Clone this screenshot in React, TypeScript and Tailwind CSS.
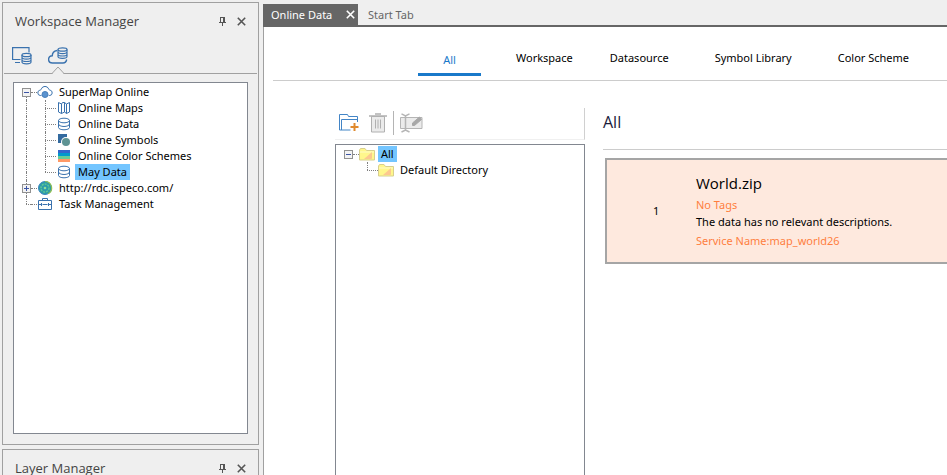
import type { ReactNode } from "react";

const blue = "#3a72ae";

function Pin() {
  return (
    <svg width="9" height="9" viewBox="0 0 9 9" fill="none" stroke="#555" shapeRendering="crispEdges">
      <path d="M2 .5h5M2.5 0v5M5.5 0v5M6.5 0v5M1 5.5h7M4.5 5v4" />
    </svg>
  );
}

function Cross() {
  return (
    <svg width="9" height="9" viewBox="0 0 9 9" fill="none" stroke="currentColor" strokeWidth="1.6">
      <path d="M.8 .8l7.4 7.4M8.2 .8L.8 8.2" />
    </svg>
  );
}

function MonitorDbIcon() {
  return (
    <svg width="20" height="18" viewBox="0 0 20 18" fill="none" stroke={blue} strokeWidth="1.2">
      <path d="M8.500 12.500H.6V.6h16.400V5.500M3 15.500h5" />
      <ellipse cx="14.500" cy="8" rx="4.500" ry="1.700" />
      <path d="M10 8v7c0 1 2 1.800 4.500 1.800S19 16 19 15V8M10 10.300c0 1 2 1.800 4.500 1.800s4.500-.8 4.500-1.800M10 12.700c0 1 2 1.800 4.500 1.800s4.500-.8 4.500-1.800" />
    </svg>
  );
}

function CloudDbIcon() {
  return (
    <svg width="20" height="18" viewBox="0 0 20 18" fill="none" stroke={blue} strokeWidth="1.200">
      <path d="M9 3.500C6 4 4.300 6 4.300 8.700 2 8.900.6 10.300.6 12.300c0 2 1.500 3.700 3.900 3.700H15c2 0 3.300-1.300 3.700-3.500" strokeWidth="1.400" />
      <ellipse cx="14.500" cy="2.500" rx="4.500" ry="1.700" />
      <path d="M10 2.500v7c0 1 2 1.800 4.500 1.800S19 10.500 19 9.500v-7M10 4.800c0 1 2 1.800 4.500 1.800S19 5.800 19 4.800M10 7.200c0 1 2 1.800 4.500 1.800S19 8.200 19 7.200" />
    </svg>
  );
}

function CloudIcon() {
  return (
    <svg width="16" height="14" viewBox="0 0 16 14" fill="none" stroke={blue}>
      <path d="M4.500 10.500H3.300A2.700 2.700 0 0 1 2.800 5.200C4 5 4 4.700 4.300 3.900a4 4 0 0 1 7.400 0c.3.800.4 1.100 1.500 1.300a2.700 2.700 0 0 1-.5 5.300h-1" />
      <circle cx="8" cy="9.500" r="3" fill="#5b93cf" stroke="#4a80bb" />
    </svg>
  );
}

function MapIcon() {
  return (
    <svg width="14" height="14" viewBox="0 0 14 14" fill="none" stroke={blue}>
      <path d="M1.500 1.500l3 1.500v9.500l-3-1.500zM4.500 3l1-1.500h2v9.500l-3 1.500M7.500 1.500l2 1.500v9.500l-2-1.500M9.500 3l3-1.500v9.500l-3 1.500" />
    </svg>
  );
}

function DbIcon() {
  return (
    <svg width="14" height="14" viewBox="0 0 14 14" fill="none" stroke={blue}>
      <ellipse cx="7" cy="3.500" rx="5.500" ry="2.300" />
      <path d="M1.500 3.500v7c0 1.300 2.500 2.300 5.500 2.300s5.500-1 5.500-2.300v-7M1.500 7c0 1.300 2.500 2.500 5.500 2.500S12.500 8.300 12.500 7" />
    </svg>
  );
}

function SymbolsIcon() {
  return (
    <svg width="14" height="14" viewBox="0 0 14 14">
      <path d="M1 1h9v9H1z" fill="#336a9f" />
      <circle cx="9" cy="9" r="5" fill="#fff" />
      <circle cx="9" cy="9" r="4" fill="#5e9393" />
    </svg>
  );
}

function ColorsIcon() {
  return (
    <svg width="14" height="14" viewBox="0 0 14 14" shapeRendering="crispEdges">
      <path d="M1 1h12v3H1z" fill="#3366cc" />
      <path d="M1 4h12v3H1z" fill="#0099cc" />
      <path d="M1 7h12v3H1z" fill="#66cc99" />
      <path d="M1 10h12v3H1z" fill="#ff9966" />
    </svg>
  );
}

function GlobeIcon() {
  return (
    <svg width="16" height="16" viewBox="0 0 16 16" fill="none">
      <circle cx="8" cy="8" r="6.500" fill="#2c9ba8" stroke="#3a86c0" />
      <path d="M8 1.500a6.500 6.500 0 0 1 3 12.300" stroke="#8cc152" strokeWidth="1.200" />
      <circle cx="8" cy="8" r="4" stroke="#5cc795" strokeWidth="1.500" strokeDasharray="2 1" />
      <circle cx="8" cy="8" r="1.300" fill="#8fdc9c" />
    </svg>
  );
}

function TaskIcon() {
  return (
    <svg width="16" height="14" viewBox="0 0 16 14" fill="none" stroke={blue}>
      <path d="M1.500 3.500h13v9h-13zM5.500 3V1.500h5V3M1.500 7.500h3M5.500 7.500h5M11.500 7.500h3M4.500 6v3M11.500 6v3" />
    </svg>
  );
}

function FolderIcon() {
  return (
    <svg width="16" height="14" viewBox="0 0 16 14">
      <path d="M.5 3l1-1.500h4.500l1.500 2h8v9.500H.5z" fill="#fff78c" stroke="#d8cf8e" />
      <path d="M1 5h14" stroke="#fffbc8" />
      <path d="M5 12l8-7v6.500l-1 .5z" fill="#fcc890" />
    </svg>
  );
}

function NewFolderIcon() {
  return (
    <svg width="20" height="19" viewBox="0 0 20 19" fill="none" stroke="#4385c6">
      <path d="M18.500 9V3.500H9.500l-1-2H.5v15.500h11M2.500 17V6.500h16" />
      <path d="M15.500 10v8M11.500 14h8" stroke="#e08a2e" strokeWidth="2" />
    </svg>
  );
}

function TrashIcon() {
  return (
    <svg width="18" height="20" viewBox="0 0 18 20" fill="none" stroke="#b0b0b0">
      <path d="M2.500 3.500h13v15.500h-13z" fill="#ebebeb" />
      <path d="M0 3h18M6 1h6" strokeWidth="1.500" />
      <path d="M6.500 6.500v9M9 6.500v9M11.500 6.500v9" />
    </svg>
  );
}

function RenameIcon() {
  return (
    <svg width="23" height="20" viewBox="0 0 23 20" fill="none" stroke="#b5b5b5">
      <path d="M.5 4.500h21.500v11H.5z" fill="#ebebeb" />
      <path d="M5.500 2v16M1.500 .8l4 2 4-2M1.500 19l4-2 4 2" strokeWidth="1.500" />
      <path d="M12.500 12.500v-2.500l7-6 2 2.500-7 6z" fill="#a8a8a8" stroke="#a8a8a8" />
    </svg>
  );
}

type TreeItem = {
  icon: ReactNode;
  label: string;
  open?: boolean;
  child?: boolean;
  selected?: boolean;
  above?: boolean;
  below?: boolean;
  last?: boolean;
};

/* One row of a tree: dotted guide lines, an optional toggle, icon and label. */
function TreeRow({ icon, label, open, child, selected, above, below, last }: TreeItem) {
  const dots = "border-dotted border-[#808080]";
  return (
    <li className="flex h-4">
      {open !== undefined ? (
        <span className="flex w-[9px] flex-col items-center">
          <span className={`h-1 w-px ${dots} ${above ? "border-l" : ""}`} />
          <button aria-label={`${open ? "Collapse" : "Expand"} ${label}`} className="block h-[9px] w-[9px]">
            <svg className="block" width="9" height="9" viewBox="0 0 9 9" shapeRendering="crispEdges">
              <rect x=".5" y=".5" width="8" height="8" fill="#f3f3f3" stroke="#919191" />
              <path d={open ? "M2 4.500h5" : "M2 4.500h5M4.500 2v5"} stroke="#3c55a5" />
            </svg>
          </button>
          <span className={`w-px flex-1 ${dots} ${below ? "border-l" : ""}`} />
        </span>
      ) : (
        <span className="flex w-[9px] flex-col pl-1">
          <span className={`h-2 ${dots} ${above ? "border-l" : ""}`} />
          <span className={`h-2 ${dots} ${below ? "border-l" : ""} ${child ? "" : "border-t"}`} />
        </span>
      )}
      {child ? (
        <span className="flex w-[25px] flex-col pl-[14px]">
          <span className={`h-2 border-l ${dots}`} />
          <span className={`h-2 border-t ${dots} ${last ? "" : "border-l"}`} />
        </span>
      ) : (
        <span className="flex w-[6px] flex-col pt-2">
          <span className={`border-t ${dots}`} />
        </span>
      )}
      <span className="flex w-4 items-center justify-center">{icon}</span>
      <span className={`ml-[3px] px-[3px] ${selected ? "bg-[#73c5ff]" : ""}`}>{label}</span>
    </li>
  );
}

function PanelHeader({ title }: { title: string }) {
  return (
    <header className="flex h-9 shrink-0 items-center justify-between px-3">
      <h2 className="font-['Open_Sans','Noto_Sans',sans-serif] text-[13px] leading-[14px] text-[#444]">{title}</h2>
      <div className="flex gap-[10px] text-[#555]">
        <button aria-label={`Pin ${title}`}><Pin /></button>
        <button aria-label={`Close ${title}`}><Cross /></button>
      </div>
    </header>
  );
}

export default function App() {
  return (
    <div className="flex h-screen overflow-hidden bg-[#efefef] font-['Noto_Sans','Open_Sans',sans-serif] text-[11px] leading-4 text-black">
      <aside className="flex w-[263px] shrink-0 flex-col gap-1 pt-0.5 pr-1 pl-0.5">
        <section className="flex flex-1 flex-col border border-[#a0a0a0]">
          <PanelHeader title="Workspace Manager" />
          <nav className="mx-px flex h-[35px] shrink-0 gap-4 border-b border-[#a0a0a0] px-2">
            <button aria-label="Local workspace" className="flex pt-2"><MonitorDbIcon /></button>
            <button aria-label="Online workspace" className="flex flex-col items-center justify-between pt-2">
              <CloudDbIcon />
              <svg className="-mb-px block" width="14" height="8" viewBox="0 0 14 8">
                <path d="M0 7.500h1L7 1l6 6.500h1" fill="#efefef" stroke="#a0a0a0" />
                <path d="M2 7.500h10" stroke="#efefef" />
              </svg>
            </button>
          </nav>
          <ul className="mx-2.5 mt-2 mb-2.5 flex-1 border border-[#828790] bg-white pt-px pl-2">
            <TreeRow open={true} below icon={<CloudIcon />} label="SuperMap Online" />
            <TreeRow child above below icon={<MapIcon />} label="Online Maps" />
            <TreeRow child above below icon={<DbIcon />} label="Online Data" />
            <TreeRow child above below icon={<SymbolsIcon />} label="Online Symbols" />
            <TreeRow child above below icon={<ColorsIcon />} label="Online Color Schemes" />
            <TreeRow child above below last icon={<DbIcon />} label="May Data" selected />
            <TreeRow open={false} above below icon={<GlobeIcon />} label="http://rdc.ispeco.com/" />
            <TreeRow above icon={<TaskIcon />} label="Task Management" />
          </ul>
        </section>
        <section className="h-[26px] shrink-0 border border-b-0 border-[#a0a0a0]">
          <PanelHeader title="Layer Manager" />
        </section>
      </aside>

      <main className="flex min-w-0 flex-1 flex-col pt-1">
        <div className="flex h-[23px] shrink-0 border-b-2 border-[#666]">
          <div className="flex w-[95px] items-center justify-between bg-[#666] pr-[3px] pl-2 text-white">
            <button>Online Data</button>
            <button aria-label="Close Online Data"><Cross /></button>
          </div>
          <button className="px-[10px] text-[#666]">Start Tab</button>
        </div>

        <div className="flex min-h-0 flex-1 flex-col border-l border-[#a0a0a0] bg-white pl-[9px]">
          <nav className="flex h-[54px] shrink-0 items-end border-b border-[#ccc] pl-[145px]">
            <button className="mb-1 w-[63px] border-b-3 border-[#1979ca] pb-[5px] text-[#1979ca]">All</button>
            <div className="mb-[14px] ml-[35px] flex gap-[46px]">
              <div className="flex gap-[37px]">
                <button>Workspace</button>
                <button>Datasource</button>
              </div>
              <button>Symbol Library</button>
              <button>Color Scheme</button>
            </div>
          </nav>

          <div className="flex min-h-0 flex-1">
            <section className="ml-[62px] flex w-[250px] shrink-0 flex-col pt-[27px]">
              <div className="mb-1 flex h-8 shrink-0 items-center border-r border-b border-r-[#d0d0d0] border-b-[#f0f0f0] pb-0.5 pl-1">
                <button aria-label="New directory"><NewFolderIcon /></button>
                <button aria-label="Delete" className="ml-[10px]"><TrashIcon /></button>
                <span className="mx-[6px] h-6 w-px bg-[#b4b4b4]" />
                <button aria-label="Rename"><RenameIcon /></button>
              </div>
              <ul className="flex-1 border border-b-0 border-[#828790] pt-px pl-2">
                <TreeRow open={true} icon={<FolderIcon />} label="All" selected />
                <TreeRow child last icon={<FolderIcon />} label="Default Directory" />
              </ul>
            </section>

            <section className="ml-[18px] min-w-0 flex-1">
              <h1 className="border-b border-[#ccc] pt-[29px] pb-[15px] font-['Open_Sans','Noto_Sans',sans-serif] text-[16px] leading-6 text-[#1a1a3a]">All</h1>
              <article className="mt-2 ml-0.5 flex h-[106px] items-center border-2 border-r-0 border-[#a5a5a5] bg-[#fee9de]">
                <span className="w-[89px] pl-[46px]">1</span>
                <div>
                  <h3 className="mb-1 font-['Open_Sans','Noto_Sans',sans-serif] text-[15px] leading-5">World.zip</h3>
                  <p className="mb-px text-[#ff7f3f]">No Tags</p>
                  <p className="mb-[3px]">The data has no relevant descriptions.</p>
                  <p className="text-[#ff7f3f]">Service Name:map_world26</p>
                </div>
              </article>
            </section>
          </div>
        </div>
      </main>
    </div>
  );
}
